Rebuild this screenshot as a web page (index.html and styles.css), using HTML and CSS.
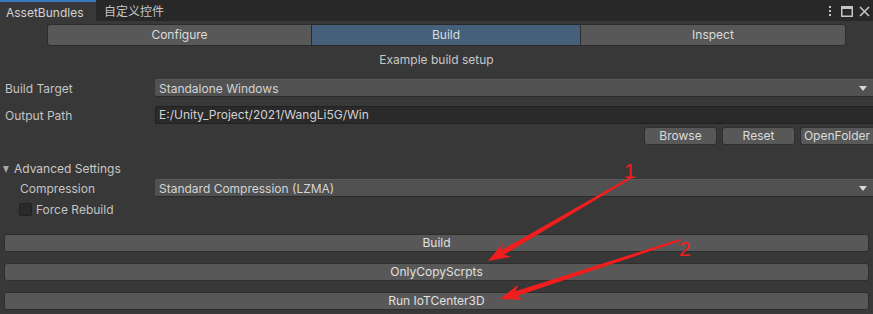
FILE: index.html
```html
<!DOCTYPE html>
<html>
<head>
<meta charset="utf-8">
<link rel="stylesheet" href="styles.css">
</head>
<body>
<div class="window">
  <div class="tabbar">
    <div class="tab active">AssetBundles</div>
    <div class="tab">自定义控件</div>
    <div class="win-icons">
      <svg width="4" height="12" viewBox="0 0 4 12"><rect x="1" y="1" width="2" height="2" fill="#c4c4c4"/><rect x="1" y="5" width="2" height="2" fill="#c4c4c4"/><rect x="1" y="9" width="2" height="2" fill="#c4c4c4"/></svg>
      <svg width="12" height="11" viewBox="0 0 12 11"><rect x="0.75" y="0.75" width="10.5" height="9.5" fill="none" stroke="#c4c4c4" stroke-width="1.5"/><rect x="0.75" y="1" width="10.5" height="2" fill="#c4c4c4"/></svg>
      <svg width="11" height="11" viewBox="0 0 11 11"><path d="M1 1 L10 10 M10 1 L1 10" stroke="#c4c4c4" stroke-width="1.6"/></svg>
    </div>
  </div>

  <div class="toolbar">
    <div class="tbtn">Configure</div>
    <div class="tbtn selected">Build</div>
    <div class="tbtn">Inspect</div>
  </div>

  <div class="subtitle">Example build setup</div>

  <div class="row first">
    <div class="label">Build Target</div>
    <div class="dropdown"><span>Standalone Windows</span><i class="caret"></i></div>
  </div>
  <div class="row second">
    <div class="label">Output Path</div>
    <div class="textfield">E:/Unity_Project/2021/WangLi5G/Win</div>
  </div>
  <div class="btnrow">
    <div class="sbtn">Browse</div>
    <div class="sbtn">Reset</div>
    <div class="sbtn">OpenFolder</div>
  </div>

  <div class="foldout"><i class="fold-tri"></i>Advanced Settings</div>
  <div class="row third">
    <div class="label indent">Compression</div>
    <div class="dropdown"><span>Standard Compression (LZMA)</span><i class="caret"></i></div>
  </div>
  <div class="checkrow">
    <div class="checkbox"></div>
    <div class="checklabel">Force Rebuild</div>
  </div>

  <div class="bigbtns">
    <div class="bbtn">Build</div>
    <div class="bbtn">OnlyCopyScrpts</div>
    <div class="bbtn">Run IoTCenter3D</div>
  </div>

  <svg class="annot" width="873" height="314" viewBox="0 0 873 314">
    <polygon fill="#f21d1d" points="632.6,177.8 504.0,254.6 511.0,256.8 488,261 503.0,243.0 501.4,250.2 631.4,176.2"/>
    <polygon fill="#f21d1d" points="680.3,241.0 517.0,296.1 523.4,299.7 500,299 518.4,284.5 515.4,291.3 679.7,239.0"/>
  </svg>
  <div class="num n1">1</div>
  <div class="num n2">2</div>
</div>
</body>
</html>
```

FILE: styles.css
```css
* { box-sizing: border-box; }
html, body { margin: 0; padding: 0; }
body {
  background: #383838;
  font-family: Inter, "Noto Sans", "Noto Sans CJK SC", sans-serif;
  font-size: 12px;
  color: #c4c4c4;
  width: 873px;
  height: 314px;
  overflow: hidden;
}
.window { position: relative; width: 873px; height: 314px; }

.tabbar {
  height: 21px;
  background: #282828;
  display: flex;
  align-items: stretch;
}
.tab {
  padding: 0 8px 0 8px;
  line-height: 23px;
  color: #c4c4c4;
  font-size: 12px;
}
.tab.active {
  width: 96px;
  background: #383838;
  border-top: 2px solid #3b78c0;
  line-height: 19px;
  padding: 1px 0 0 6px;
  color: #d2d2d2;
}
.win-icons {
  margin-left: auto;
  display: flex;
  align-items: center;
  gap: 6px;
  padding-right: 3px;
  padding-top: 1px;
}
.win-icons svg { display: block; }
.win-icons svg:first-child { margin-right: 3px; }

.toolbar {
  display: flex;
  margin: 3px 27px 0 47px;
  height: 22px;
}
.tbtn {
  flex: 1;
  background: #585858;
  border: 1px solid #2d2d2d;
  border-right: none;
  text-align: center;
  line-height: 20px;
  color: #dcdcdc;
}
.tbtn:first-child { border-radius: 3px 0 0 3px; flex: 0 0 264px; }
.tbtn.selected { background: #46607c; flex: 0 0 269px; border-color: #2a2a2a; }
.tbtn:last-child { border-right: 1px solid #2d2d2d; border-radius: 0 3px 3px 0; }

.subtitle {
  margin-top: 4px;
  height: 20px;
  line-height: 20px;
  text-align: center;
  color: #c8c8c8;
}

.row {
  display: flex;
  align-items: center;
  height: 18px;
}
.row.first { margin-top: 9px; }
.row.second { margin-top: 9px; }
.row.third { margin-top: 3px; }
.label {
  width: 155px;
  padding-left: 5px;
  color: #c4c4c4;
}
.label.indent { padding-left: 20px; }

.dropdown {
  flex: 1;
  height: 18px;
  background: #515151;
  border-top: 1px solid #5a5a5a;
  border-bottom: 1px solid #2b2b2b;
  border-radius: 2px 0 0 2px;
  display: flex;
  align-items: center;
  padding-left: 4px;
  padding-right: 6px;
  color: #d4d4d4;
}
.caret {
  margin-left: auto;
  width: 0;
  height: 0;
  border-left: 4px solid transparent;
  border-right: 4px solid transparent;
  border-top: 5px solid #d8d8d8;
}
.textfield {
  flex: 1;
  height: 18px;
  background: #2a2a2a;
  border: 1px solid #212121;
  border-right: none;
  border-radius: 2px 0 0 2px;
  line-height: 16px;
  padding-left: 3px;
  color: #d2d2d2;
}

.btnrow {
  display: flex;
  justify-content: flex-end;
  gap: 5px;
  margin-top: 3px;
  height: 18px;
}
.sbtn {
  width: 73px;
  height: 18px;
  background: #585858;
  border: 1px solid #2e2e2e;
  border-radius: 3px;
  text-align: center;
  line-height: 16px;
  color: #dcdcdc;
}
.sbtn:last-child { border-right: none; border-radius: 3px 0 0 3px; }

.foldout {
  margin-top: 17px;
  height: 14px;
  line-height: 14px;
  display: flex;
  align-items: center;
  padding-left: 3px;
  color: #c8c8c8;
}
.fold-tri {
  width: 0;
  height: 0;
  border-left: 3.5px solid transparent;
  border-right: 3.5px solid transparent;
  border-top: 7px solid #a8a8a8;
  margin-right: 5px;
}

.checkrow {
  display: flex;
  align-items: center;
  margin-top: 5px;
  height: 14px;
  padding-left: 19px;
}
.checkbox {
  width: 13px;
  height: 13px;
  background: #2a2a2a;
  border: 1px solid #212121;
  border-radius: 2px;
}
.checklabel { margin-left: 4px; color: #c4c4c4; }

.bigbtns {
  margin: 18px 4px 0 4px;
  display: flex;
  flex-direction: column;
  gap: 11px;
}
.bbtn {
  height: 18px;
  background: #585858;
  border: 1px solid #2e2e2e;
  border-radius: 3px;
  text-align: center;
  line-height: 16px;
  color: #e0e0e0;
}

.annot { position: absolute; left: 0; top: 0; pointer-events: none; }
.num {
  position: absolute;
  font-family: "Liberation Sans", Arial, sans-serif;
  font-size: 21px;
  color: #f21d1d;
  line-height: 1;
}
.n1 { left: 624px; top: 160px; }
.n2 { left: 679px; top: 238px; }
```
